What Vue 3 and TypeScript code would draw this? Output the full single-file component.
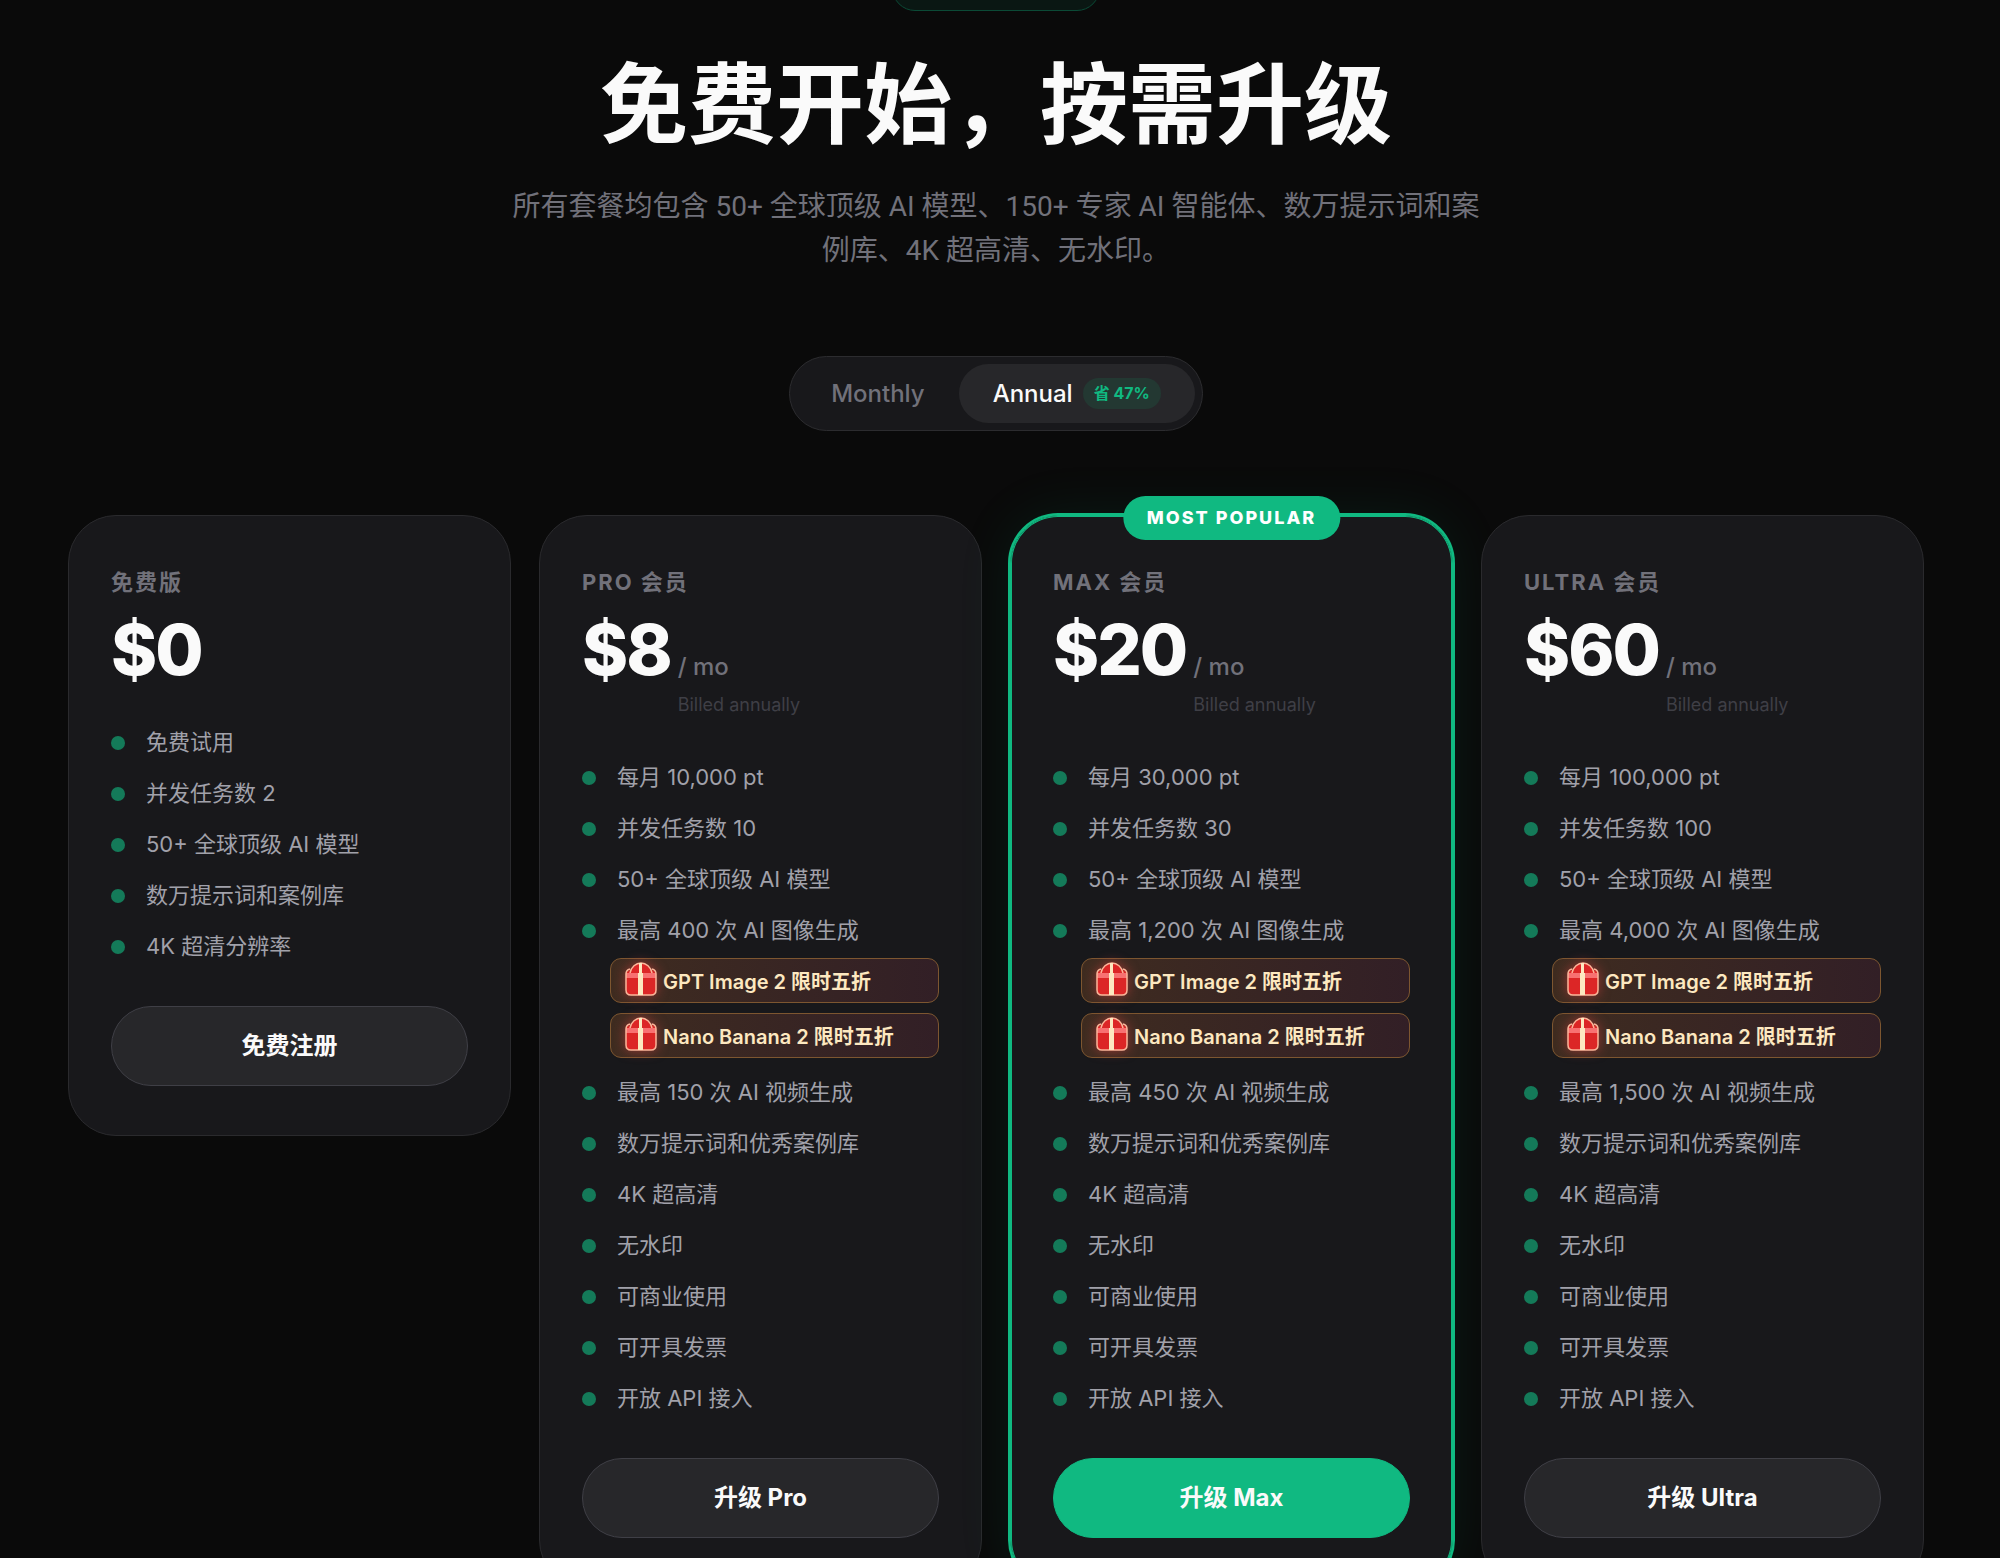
<script setup lang="ts">
import { ref } from 'vue'

interface Feature {
  text: string
  promos?: string[]
}

interface Plan {
  id: string
  name: string
  price: string
  paid: boolean
  featured?: boolean
  cta: string
  features: Feature[]
}

const promos = ['GPT Image 2 限时五折', 'Nano Banana 2 限时五折']

function paidFeatures(points: string, tasks: string, images: string, videos: string): Feature[] {
  return [
    { text: `每月 ${points} pt` },
    { text: `并发任务数 ${tasks}` },
    { text: '50+ 全球顶级 AI 模型' },
    { text: `最高 ${images} 次 AI 图像生成`, promos },
    { text: `最高 ${videos} 次 AI 视频生成` },
    { text: '数万提示词和优秀案例库' },
    { text: '4K 超高清' },
    { text: '无水印' },
    { text: '可商业使用' },
    { text: '可开具发票' },
    { text: '开放 API 接入' },
  ]
}

const plans: Plan[] = [
  {
    id: 'free',
    name: '免费版',
    price: '$0',
    paid: false,
    cta: '免费注册',
    features: [
      { text: '免费试用' },
      { text: '并发任务数 2' },
      { text: '50+ 全球顶级 AI 模型' },
      { text: '数万提示词和案例库' },
      { text: '4K 超清分辨率' },
    ],
  },
  { id: 'pro', name: 'PRO 会员', price: '$8', paid: true, cta: '升级 Pro', features: paidFeatures('10,000', '10', '400', '150') },
  { id: 'max', name: 'MAX 会员', price: '$20', paid: true, featured: true, cta: '升级 Max', features: paidFeatures('30,000', '30', '1,200', '450') },
  { id: 'ultra', name: 'ULTRA 会员', price: '$60', paid: true, cta: '升级 Ultra', features: paidFeatures('100,000', '100', '4,000', '1,500') },
]

const annual = ref(true)
</script>

<template>
  <main class="page">
    <div class="eyebrow"></div>
    <h1 class="title">免费开始，按需升级</h1>
    <p class="subtitle">
      所有套餐均包含 50+ 全球顶级 AI 模型、150+ 专家 AI 智能体、数万提示词和案<br />例库、4K 超高清、无水印。
    </p>

    <div class="toggle">
      <button type="button" class="toggle-btn" :class="{ active: !annual }" @click="annual = false">Monthly</button>
      <button type="button" class="toggle-btn" :class="{ active: annual }" @click="annual = true">
        Annual <span class="save">省 47%</span>
      </button>
    </div>

    <section class="plans">
      <article v-for="plan in plans" :key="plan.id" class="card" :class="{ featured: plan.featured }">
        <span v-if="plan.featured" class="ribbon">MOST POPULAR</span>
        <h2 class="name">{{ plan.name }}</h2>
        <div class="price-row">
          <span class="price">{{ plan.price }}</span>
          <span v-if="plan.paid" class="term">
            <span class="per">/ mo</span>
            <span class="billed">Billed annually</span>
          </span>
        </div>
        <ul class="features">
          <li v-for="feature in plan.features" :key="feature.text">
            <div class="feature">{{ feature.text }}</div>
            <div v-if="feature.promos" class="promos">
              <div v-for="promo in feature.promos" :key="promo" class="promo">
                <svg class="gift" viewBox="0 0 32 34" aria-hidden="true">
                  <rect x="1" y="8" width="30" height="25" rx="5" fill="#dc2626" />
                  <path d="M5 11C6 5 11 1 16 1S26 5 27 11" fill="#dc2626" stroke="#fcb69a" stroke-width="1.5" />
                  <rect x="1" y="11" width="30" height="5" fill="#f87171" />
                  <path d="M5 7Q1 8 1 12V28Q1 33 6 33H26Q31 33 31 28V12Q31 8 27 7" fill="none" stroke="#fcb69a" stroke-width="1.5" />
                  <rect x="14" y="1" width="3" height="10" fill="#fde8c0" />
                  <rect x="13" y="11" width="5" height="22" fill="#fde8c0" />
                </svg>
                <span>{{ promo }}</span>
              </div>
            </div>
          </li>
        </ul>
        <button type="button" class="cta">{{ plan.cta }}</button>
      </article>
    </section>
  </main>
</template>

<style>
body {
  background: #0a0a0a;
}
</style>

<style scoped>
.page {
  display: flex;
  flex-direction: column;
  align-items: center;
  height: 100vh;
  overflow: hidden;
  box-sizing: border-box;
  padding: 0 76px 0 68px;
  background: #0a0a0a;
  color: #fafafa;
  font-family: Inter, 'Noto Sans CJK SC', sans-serif;
}

.eyebrow {
  flex: none;
  box-sizing: border-box;
  width: 208px;
  height: 46px;
  margin-top: -35px;
  border: 1px solid #0b4a36;
  border-radius: 23px;
  background: #0a1713;
}

.title {
  margin: 41px 0 0;
  font-size: 88px;
  line-height: 104px;
  font-weight: 700;
}

.subtitle {
  margin: 29px 0 0;
  font-family: Roboto, 'Noto Sans CJK SC', sans-serif;
  font-size: 28px;
  line-height: 44px;
  color: #71717a;
  text-align: center;
  white-space: nowrap;
}

.toggle {
  display: flex;
  flex: none;
  margin-top: 83px;
  padding: 7px;
  border: 1px solid #2c2c2f;
  border-radius: 44px;
  background: #18181b;
}

.toggle-btn {
  display: flex;
  align-items: center;
  gap: 10px;
  height: 59px;
  padding: 0 34px;
  border: 0;
  border-radius: 30px;
  background: transparent;
  color: #71717a;
  font: 500 24px/34px Inter, 'Noto Sans CJK SC', sans-serif;
}

.toggle-btn.active {
  background: #27272a;
  color: #fafafa;
}

.save {
  padding: 0 11px;
  border-radius: 16px;
  background: #233832;
  color: #10b981;
  font-size: 16px;
  line-height: 31px;
  font-weight: 700;
}

.plans {
  display: grid;
  grid-template-columns: repeat(4, 1fr);
  align-items: start;
  gap: 28px;
  align-self: stretch;
  margin-top: 84px;
}

.card {
  position: relative;
  padding: 49px 42px;
  border: 1px solid #2a2a2d;
  border-radius: 48px;
  background: #18181b;
}

.card.featured {
  border-color: #10b981;
  box-shadow: inset 0 0 0 1px #10b981, 0 0 0 2px #10b981, 0 0 56px rgba(16, 185, 129, 0.1);
}

.ribbon {
  position: absolute;
  top: -20px;
  left: 50%;
  transform: translateX(-50%);
  padding: 0 24px;
  border-radius: 22px;
  background: #10b981;
  color: #fff;
  font-size: 18px;
  line-height: 44px;
  font-weight: 800;
  letter-spacing: 2px;
  white-space: nowrap;
}

.name {
  margin: 0 0 15px;
  font-size: 22px;
  line-height: 34px;
  font-weight: 700;
  letter-spacing: 2px;
  color: #71717a;
}

.price-row {
  display: flex;
  align-items: baseline;
  gap: 7px;
}

.price {
  font-size: 70px;
  line-height: 72px;
  font-weight: 800;
  letter-spacing: -2px;
}

.term {
  display: flex;
  flex-direction: column;
  gap: 5px;
}

.per {
  font-size: 24px;
  line-height: 34px;
  font-weight: 500;
  color: #71717a;
}

.billed {
  font-size: 18px;
  line-height: 32px;
  color: #3f3f46;
}

.features {
  display: flex;
  flex-direction: column;
  gap: 18px;
  margin: 40px 0 43px;
  padding: 0;
  list-style: none;
}

.feature {
  display: flex;
  align-items: center;
  gap: 21px;
  font-size: 22px;
  line-height: 33px;
  color: #a1a1aa;
  white-space: nowrap;
}

.feature::before {
  content: '';
  flex: none;
  width: 14px;
  height: 14px;
  border-radius: 50%;
  background: #147a59;
}

.promos {
  display: flex;
  flex-direction: column;
  gap: 10px;
  margin: 11px 0 0 28px;
}

.promo {
  display: flex;
  align-items: center;
  gap: 6px;
  box-sizing: border-box;
  height: 45px;
  padding: 0 14px;
  border: 1px solid #7d5630;
  border-radius: 11px;
  background: linear-gradient(90deg, #3f2c20, #321f26);
  color: #fde8c0;
  font-size: 20px;
  font-weight: 600;
  white-space: nowrap;
}

.gift {
  flex: none;
  width: 32px;
  height: 34px;
  margin-bottom: 4px;
  filter: drop-shadow(0 0 6px rgba(239, 68, 68, 0.5));
}

.cta {
  display: block;
  width: 100%;
  height: 80px;
  border: 1px solid #3f3f46;
  border-radius: 40px;
  background: #27272a;
  color: #fafafa;
  font: 700 24px/34px Inter, 'Noto Sans CJK SC', sans-serif;
}

.featured .cta {
  border-color: #10b981;
  background: #10b981;
}
</style>
